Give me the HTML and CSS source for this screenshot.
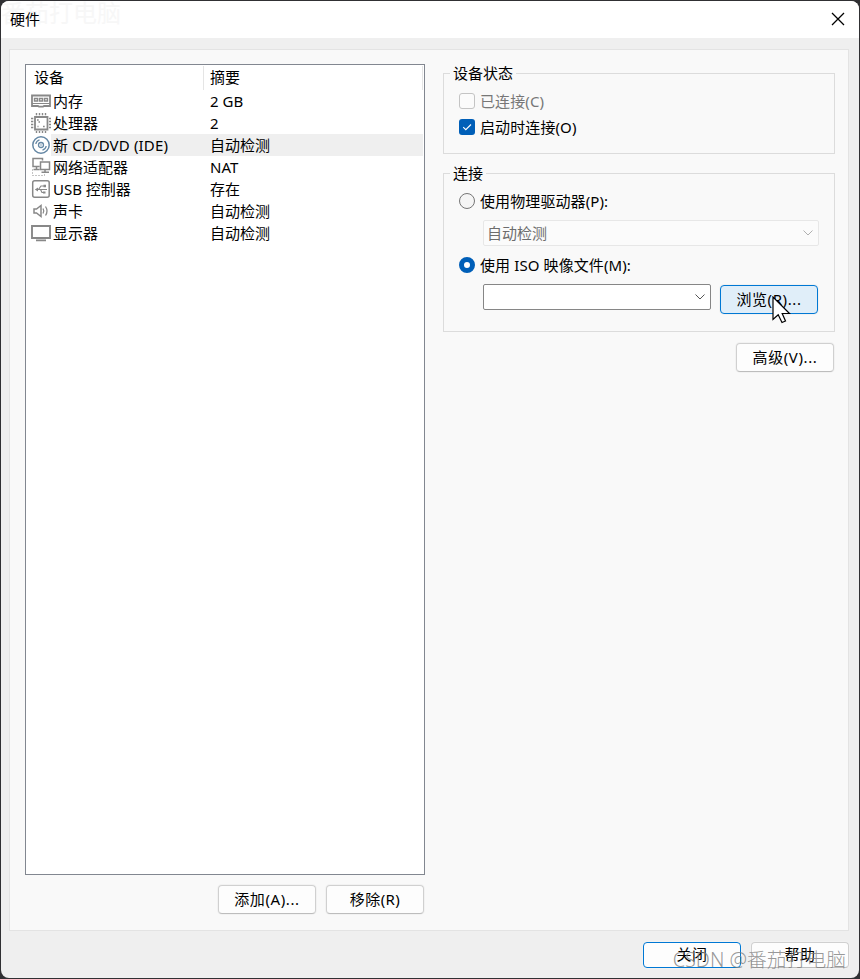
FILE: index.html
```html
<!DOCTYPE html>
<html lang="zh-CN">
<head>
<meta charset="utf-8">
<title>硬件</title>
<link rel="stylesheet" href="styles.css">
</head>
<body>
<div class="window">
  <header class="titlebar">
    <span class="ghost">番茄打电脑</span>
    <h1 class="title">硬件</h1>
    <svg class="close" width="12" height="12" viewBox="0 0 12 12"><path d="M0 0L12 12M12 0L0 12"/></svg>
  </header>
  <main class="panel">
    <section class="left">
      <div class="list">
        <div class="row head"><span class="name">设备</span><span class="summary">摘要</span></div>
        <div class="row"><span class="icon"><svg width="20" height="20" viewBox="0 0 20 20"><path class="w2" d="M1 4.500H19V15H13L12 15.700H8L7 15H1Z"/><path d="M3.500 7.500h3v2.500h-3zM8.500 7.500h3v2.500h-3zM13.500 7.500h3v2.500h-3z" stroke-width="1.400"/><path d="M1 12.500h18"/></svg></span><span class="name">内存</span><span class="summary">2 GB</span></div>
        <div class="row"><span class="icon"><svg width="20" height="20" viewBox="0 0 20 20"><path d="M4 4h12.500v12.500H4z" stroke-width="1.800"/><path d="M5.500 0v2.300M8.500 0v2.300M11.500 0v2.300M14.500 0v2.300M5.500 18v2M8.500 18v2M11.500 18v2M14.500 18v2M0 5.500h2.300M0 8.500h2.300M0 11.500h2.300M0 14.500h2.300M18 5.500h2M18 8.500h2M18 11.500h2M18 14.500h2" stroke-width="1.400"/><path d="M6 7h1.700M7.500 9h1.500M12 13.500h1.700M6.500 13.500h1" stroke-width="1.500"/></svg></span><span class="name">处理器</span><span class="summary">2</span></div>
        <div class="row selected"><span class="icon disc"><svg width="20" height="20" viewBox="0 0 20 20"><circle cx="10" cy="10" r="8.200" stroke-width="1.500"/><circle cx="10" cy="10" r="2.500" stroke-width="1.300"/><circle cx="10" cy="10" r=".3"/><path d="M4.800 9A5.500 5.500 0 0 1 8.500 4.800M15.200 11A5.500 5.500 0 0 1 11.500 15.200" stroke-width="1.300"/></svg></span><span class="name">新 CD/DVD (IDE)</span><span class="summary">自动检测</span></div>
        <div class="row"><span class="icon"><svg width="20" height="20" viewBox="0 0 20 20"><path d="M8.500 9.500H2V1.500h9.500v2M9.500 5h9v7.500h-9zM5.500 9.500v3M2.500 12.500h6M14 12.500v2.500M10.500 15.300h7.500" stroke-width="1.500"/><path d="M1.500 12.500v6H13.500V16" stroke-dasharray="1 2"/></svg></span><span class="name">网络适配器</span><span class="summary">NAT</span></div>
        <div class="row"><span class="icon"><svg width="20" height="20" viewBox="0 0 20 20"><rect x="1.700" y="1.700" width="16.500" height="16.500" rx="2" stroke-width="1.500"/><path d="M5 10.500h11M7.500 10.500l2.500-3.500h3M9.500 10.500l1.500 3h2.500" stroke-width="1.200"/><path class="fill" d="M3.800 10.500l3.200-2v4zM12.500 5.800H15v2.500h-2.500zM12 12.500h2.500v2H12z"/></svg></span><span class="name">USB 控制器</span><span class="summary">存在</span></div>
        <div class="row"><span class="icon"><svg width="20" height="20" viewBox="0 0 20 20"><path d="M3 8h2.500L10 4.500v11L5.500 12H3z" stroke-width="1.500"/><path d="M12 7.500q1.600 2.500 0 5M14.500 5.500q3 4.500 0 9" stroke-width="1.300"/></svg></span><span class="name">声卡</span><span class="summary">自动检测</span></div>
        <div class="row"><span class="icon"><svg width="20" height="20" viewBox="0 0 20 20"><path d="M1 3h18v12H1z" stroke-width="1.900"/><path d="M5 17.300h10" stroke-width="1.700"/></svg></span><span class="name">显示器</span><span class="summary">自动检测</span></div>
      </div>
      <div class="actions"><button class="btn">添加(A)...</button><button class="btn">移除(R)</button></div>
    </section>
    <section class="right">
      <div class="group status">
        <h2 class="legend">设备状态</h2>
        <label class="option disabled"><span class="box"></span>已连接(C)</label>
        <label class="option"><span class="box checked"><svg width="16" height="16" viewBox="0 0 16 16"><path d="M4.200 8.200l2.600 2.500L12 5.500"/></svg></span>启动时连接(O)</label>
      </div>
      <div class="group connection">
        <h2 class="legend">连接</h2>
        <label class="option"><span class="radio"></span>使用物理驱动器(P):</label>
        <div class="combo off"><span>自动检测</span><svg width="10" height="6" viewBox="0 0 10 6"><path d="M.5 .5L5 5L9.500 .5"/></svg></div>
        <label class="option"><span class="radio on"></span>使用 ISO 映像文件(M):</label>
        <div class="file"><div class="combo"><span></span><svg width="10" height="6" viewBox="0 0 10 6"><path d="M.5 .5L5 5L9.500 .5"/></svg></div>
          <button class="btn hot"><span>浏览(R)...</span><svg class="cursor" width="20" height="29" viewBox="0 0 20 29"><path d="M1 1V23.500L6.200 18.800L10 26.500L13.500 25L10.200 17.500H17.500Z"/></svg></button></div>
      </div>
      <button class="btn advanced"><span>高级(V)...</span></button>
    </section>
  </main>
  <footer class="footer"><button class="btn primary">关闭</button><button class="btn">帮助</button><span class="watermark">CSDN @番茄打电脑</span></footer>
</div>
</body>
</html>
```
FILE: styles.css
```css
* { box-sizing: border-box; }
body { margin: 0; background: #303033; font: 15px/22px "Noto Sans", "Noto Sans CJK SC", sans-serif; color: #000; }
svg { display: block; fill: none; stroke: #888; }
h1, h2 { margin: 0; font: inherit; }
.window { width: 858px; height: 977px; margin: 1px; background: #efefef; border-radius: 8px; overflow: hidden; display: flex; flex-direction: column; position: relative; }
.titlebar { height: 37px; flex: none; background: #fff; display: flex; align-items: center; justify-content: space-between; padding: 0 15px 2px 9px; position: relative; }
.title { position: relative; }
.ghost { position: absolute; left: 0; top: 1px; font-size: 24px; color: #f7f7f7; white-space: nowrap; }
.close { stroke: #000; stroke-width: 1.3; overflow: visible; }
.panel { width: 840px; height: 882px; margin: 11px 0 0 8px; background: #f9f9f9; border: 1px solid #e3e3e3; display: flex; gap: 18px; padding: 14px 13px 0 15px; flex: none; }
.left { width: 400px; }
.list { height: 811px; border: 1px solid #828790; background: #fff; padding: 1px 1px 0 0; }
.row { display: flex; align-items: center; height: 22px; white-space: nowrap; }
.head { height: 24px; }
.head .name { width: 178px; height: 24px; line-height: 22px; padding-left: 8px; border-right: 1px solid #e5e5e5; }
.head .summary { height: 24px; line-height: 22px; border-right: 1px solid #e5e5e5; }
.icon { width: 27px; padding-left: 5px; }
.disc svg { stroke: #6688a5; }
.icon .fill { fill: #888; stroke: none; }
.w2 { stroke-width: 1.8; }
.name { width: 151px; flex: none; }
.summary { flex: 1; padding-left: 6px; }
.selected { background: linear-gradient(90deg, #fff 25px, #efefef 25px); }
.selected .name { letter-spacing: .15px; }
.actions { display: flex; justify-content: flex-end; gap: 10px; padding: 10px 1px 0 0; }
.btn { width: 98px; height: 29px; padding: 0 0 2px; border: 1px solid #d0d0d0; border-bottom-color: #bdbdbd; border-radius: 4px; background: #fdfdfd; font: inherit; letter-spacing: .4px; color: #000; position: relative; box-shadow: 0 0 0 1px #f2f2f2; white-space: nowrap; }
.hot span, .advanced span, .actions .btn:first-child { letter-spacing: .6px; }
.btn.hot { border-color: #0078d4; background: #e0eef9; }
.btn.primary { border-color: #0078d4; }
.cursor { position: absolute; left: 51px; top: 10px; fill: #fff; stroke: #000; stroke-width: 1.2; z-index: 2; }
.right { width: 392px; padding-top: 9px; display: flex; flex-direction: column; }
.group { border: 1px solid #dcdcdc; padding: 0 15px; }
.legend { width: max-content; height: 22px; margin: -12px 0 0 -9px; padding: 0 3px; background: #f9f9f9; }
.status { height: 81px; }
.connection { height: 159px; margin-top: 19px; }
.option { display: flex; align-items: center; gap: 5px; height: 26px; white-space: nowrap; letter-spacing: .1px; }
.status .option:first-of-type, .connection .option:first-of-type { margin-top: 4px; }
.disabled { color: #777; }
.box, .radio { width: 16px; height: 16px; flex: none; border: 1px solid #c4c4c4; border-radius: 3px; background: #fbfbfb; }
.checked { background: #005fb8; border: 0; }
.checked svg { stroke: #fff; stroke-width: 1.1; }
.radio { border-radius: 50%; border-color: #767676; background: #f5f5f5; }
.radio.on { border: 5px solid #005fb8; background: #fff; }
.combo { height: 26px; border: 1px solid #868686; border-radius: 2px; background: #fff; display: flex; align-items: center; justify-content: space-between; padding: 0 5px 0 3px; width: 228px; flex: none; }
.combo svg { stroke: #555; }
.off { width: 336px; margin: 6px 0 6px 24px; border-color: #e7e7e7; background: #fbfbfb; color: #6d6d6d; }
.off svg { stroke: #b0b0b0; }
.file { display: flex; align-items: flex-start; gap: 9px; margin: 6px 0 0 24px; }
.file .btn { margin-top: 1px; flex: none; }
.advanced { margin: 11px 1px 0 0; align-self: flex-end; }
.footer { display: flex; justify-content: flex-end; gap: 10px; padding: 11px 10px 0 0; position: relative; }
.footer .btn { height: 26px; }
.watermark { position: absolute; right: 13px; top: 15px; font: 300 19.8px/28px "Noto Sans", "Noto Sans CJK SC", sans-serif; color: rgba(125,125,125,.8); white-space: nowrap; }
```
